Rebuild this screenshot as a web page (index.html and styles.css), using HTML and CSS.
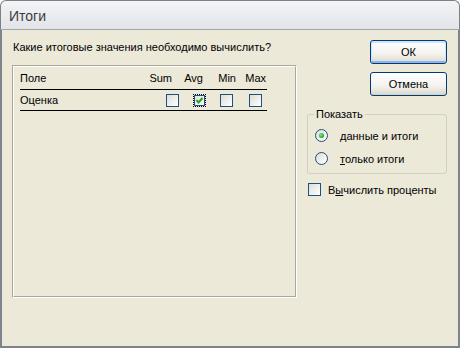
FILE: index.html
```html
<!DOCTYPE html>
<html lang="ru">
<head>
	<meta charset="UTF-8">
	<title>Итоги</title>
	<link rel="stylesheet" href="styles.css">
</head>
<body>
	<div class="window">
		<div class="titlebar">
			<span class="title">Итоги</span>
		</div>
		<div class="client">
			<div class="main">
				<p class="question">Какие итоговые значения необходимо вычислить?</p>
				<div class="panel">
					<div class="panel-inner">
						<div class="grid-head">
							<span class="field">Поле</span>
							<span>Sum</span>
							<span>Avg</span>
							<span>Min</span>
							<span>Max</span>
						</div>
						<div class="grid-row">
							<span class="field">Оценка</span>
							<span class="cb"></span>
							<span class="cb checked focus">
								<svg width="11" height="11" viewBox="0 0 11 11"><polyline points="2.5,5 4.5,7.5 8.5,3" fill="none" stroke="#21a121" stroke-width="2"/></svg>
							</span>
							<span class="cb"></span>
							<span class="cb"></span>
						</div>
					</div>
				</div>
			</div>
			<div class="side">
				<button class="btn default">ОК</button>
				<button class="btn">Отмена</button>
				<fieldset class="group">
					<legend>Показать</legend>
					<div class="option"><span class="radio on"></span><span><u>д</u>анные и итоги</span></div>
					<div class="option"><span class="radio"></span><span><u>т</u>олько итоги</span></div>
				</fieldset>
				<div class="option check"><span class="cb"></span><span>В<u>ы</u>числить проценты</span></div>
			</div>
		</div>
	</div>
</body>
</html>
```

FILE: styles.css
```css
body {
	margin: 0;
	font-family: "Liberation Sans", Arial, sans-serif;
	font-size: 11px;
	color: #000;
}
.window {
	width: 460px;
	height: 348px;
	display: flex;
	flex-direction: column;
}
.titlebar {
	height: 28px;
	border: 1px solid #7c8189;
	border-bottom-color: #a3a7ad;
	border-radius: 6px 6px 0 0;
	background: linear-gradient(#f3f4f6, #e2e4e8);
	display: flex;
	align-items: center;
	padding-left: 8px;
}
.title {
	font-size: 14px;
	color: #3b3b3b;
	padding-top: 2px;
}
.client {
	flex: 1;
	background-color: #ece9d8;
	border: 2px solid #7e848b;
	border-top: none;
	display: flex;
	gap: 10px;
	padding: 10px 11px 0 10px;
}
.main {
	width: 285px;
}
.question {
	margin: 0 0 11px 0;
	line-height: 14px;
	padding-left: 1px;
}
.panel {
	height: 233px;
	box-sizing: border-box;
	border: 1px solid #aca899;
	border-right-color: #fff;
	border-bottom-color: #fff;
}
.panel-inner {
	height: 100%;
	box-sizing: border-box;
	border: 1px solid #fff;
	border-right-color: #aca899;
	border-bottom-color: #aca899;
	padding: 0 28px 0 6px;
}
.grid-head {
	display: grid;
	grid-template-columns: 122px 30px 31px 33px 30px;
	margin-top: 4px;
	line-height: 14px;
	padding-bottom: 4px;
	border-bottom: 1px solid #000;
	text-align: right;
}
.grid-head .field,
.grid-row .field {
	text-align: left;
}
.grid-row {
	display: grid;
	grid-template-columns: 146px 27px 27px 29px 13px;
	align-items: center;
	height: 20px;
	border-bottom: 1px solid #000;
}
.cb {
	display: block;
	width: 13px;
	height: 13px;
	box-sizing: border-box;
	border: 1px solid #1c5180;
	background: linear-gradient(135deg, #dcdcd7, #fff);
}
.cb svg {
	display: block;
}
.cb.focus {
	border: 1px dotted #000;
	box-shadow: inset 0 0 0 1px #1c5180;
}
.side {
	width: 140px;
	display: flex;
	flex-direction: column;
	align-items: flex-end;
}
.btn {
	width: 77px;
	height: 24px;
	margin: 0 0 8px 0;
	padding: 0;
	font-family: inherit;
	font-size: 11px;
	color: #000;
	border: 1px solid #003c74;
	border-radius: 3px;
	background: linear-gradient(#fff, #f3f2ee 60%, #e2ded3 90%, #d6d0c5);
}
.btn.default {
	box-shadow: inset 0 1px 0 1px #cee7ff, inset 0 -1px 0 1px #8fb2ed;
}
.group {
	width: 140px;
	box-sizing: border-box;
	margin: 3px 0 0 0;
	padding: 3px 6px 3px 6px;
	border: 1px solid #d0d0bf;
	border-radius: 3px;
}
.group legend {
	padding: 0 2px;
	line-height: 14px;
}
.option {
	display: flex;
	align-items: center;
	height: 23px;
	gap: 12px;
	padding-left: 1px;
}
.radio {
	width: 13px;
	height: 13px;
	box-sizing: border-box;
	border: 1px solid #1c5180;
	border-radius: 50%;
	background: linear-gradient(135deg, #dcdcd7, #fff);
	display: flex;
	align-items: center;
	justify-content: center;
}
.radio.on::after {
	content: "";
	width: 5px;
	height: 5px;
	border-radius: 50%;
	background: radial-gradient(circle at 40% 40%, #8ee58a, #21a121 70%);
}
.option.check {
	align-self: stretch;
	height: 15px;
	margin-top: 8px;
	gap: 7px;
}
```
